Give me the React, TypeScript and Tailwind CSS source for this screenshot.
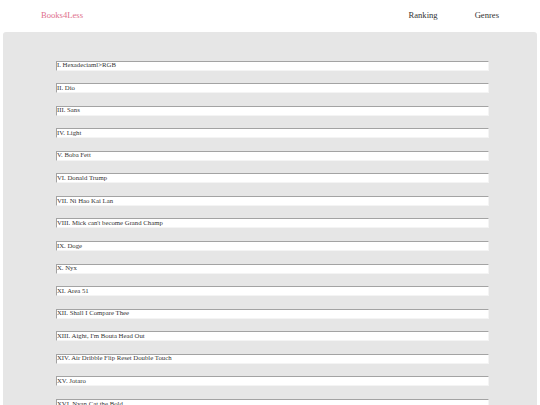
import React from "react";

const items = [
  "I. Hexadeciaml>RGB",
  "II. Dio",
  "III. Sans",
  "IV. Light",
  "V. Boba Fett",
  "VI. Donald Trump",
  "VII. Ni Hao Kai Lan",
  "VIII. Mick can't become Grand Champ",
  "IX. Doge",
  "X. Nyx",
  "XI. Area 51",
  "XII. Shall I Compare Thee",
  "XIII. Aight, I'm Bouta Head Out",
  "XIV. Air Dribble Flip Reset Double Touch",
  "XV. Jotaro",
  "XVI. Nyan Cat the Bold",
];

export default function App() {
  return (
    <div
      className="w-[540px] h-[405px] overflow-hidden bg-white"
      style={{ fontFamily: '"Liberation Serif", "Times New Roman", serif' }}
    >
      <header className="h-[32px] flex items-center justify-between pl-[41px] pr-[41px] pb-[1px]">
        <span className="text-[8.6px] text-[#e0708c] leading-none">Books4Less</span>
        <nav className="flex gap-[37px] text-[8.6px] text-[#333] leading-none">
          <span>Ranking</span>
          <span>Genres</span>
        </nav>
      </header>
      <main className="mx-[3px] bg-[#e6e6e6] rounded-t-[3px] pt-[28.5px] pl-[52.5px] pr-[48px] h-[400px] flex flex-col gap-[12.57px]">
        {items.map((t) => (
          <div
            key={t}
            className="h-[10px] shrink-0 bg-white border-t-[1.5px] border-l-[1.5px] border-t-[#a3a3a3] border-l-[#a3a3a3] border-b border-r border-b-[#f4f4f4] border-r-[#f4f4f4] flex items-center pl-[0.5px] text-[6.75px] leading-none text-[#333] whitespace-nowrap overflow-hidden"
          >
            {t}
          </div>
        ))}
      </main>
    </div>
  );
}
